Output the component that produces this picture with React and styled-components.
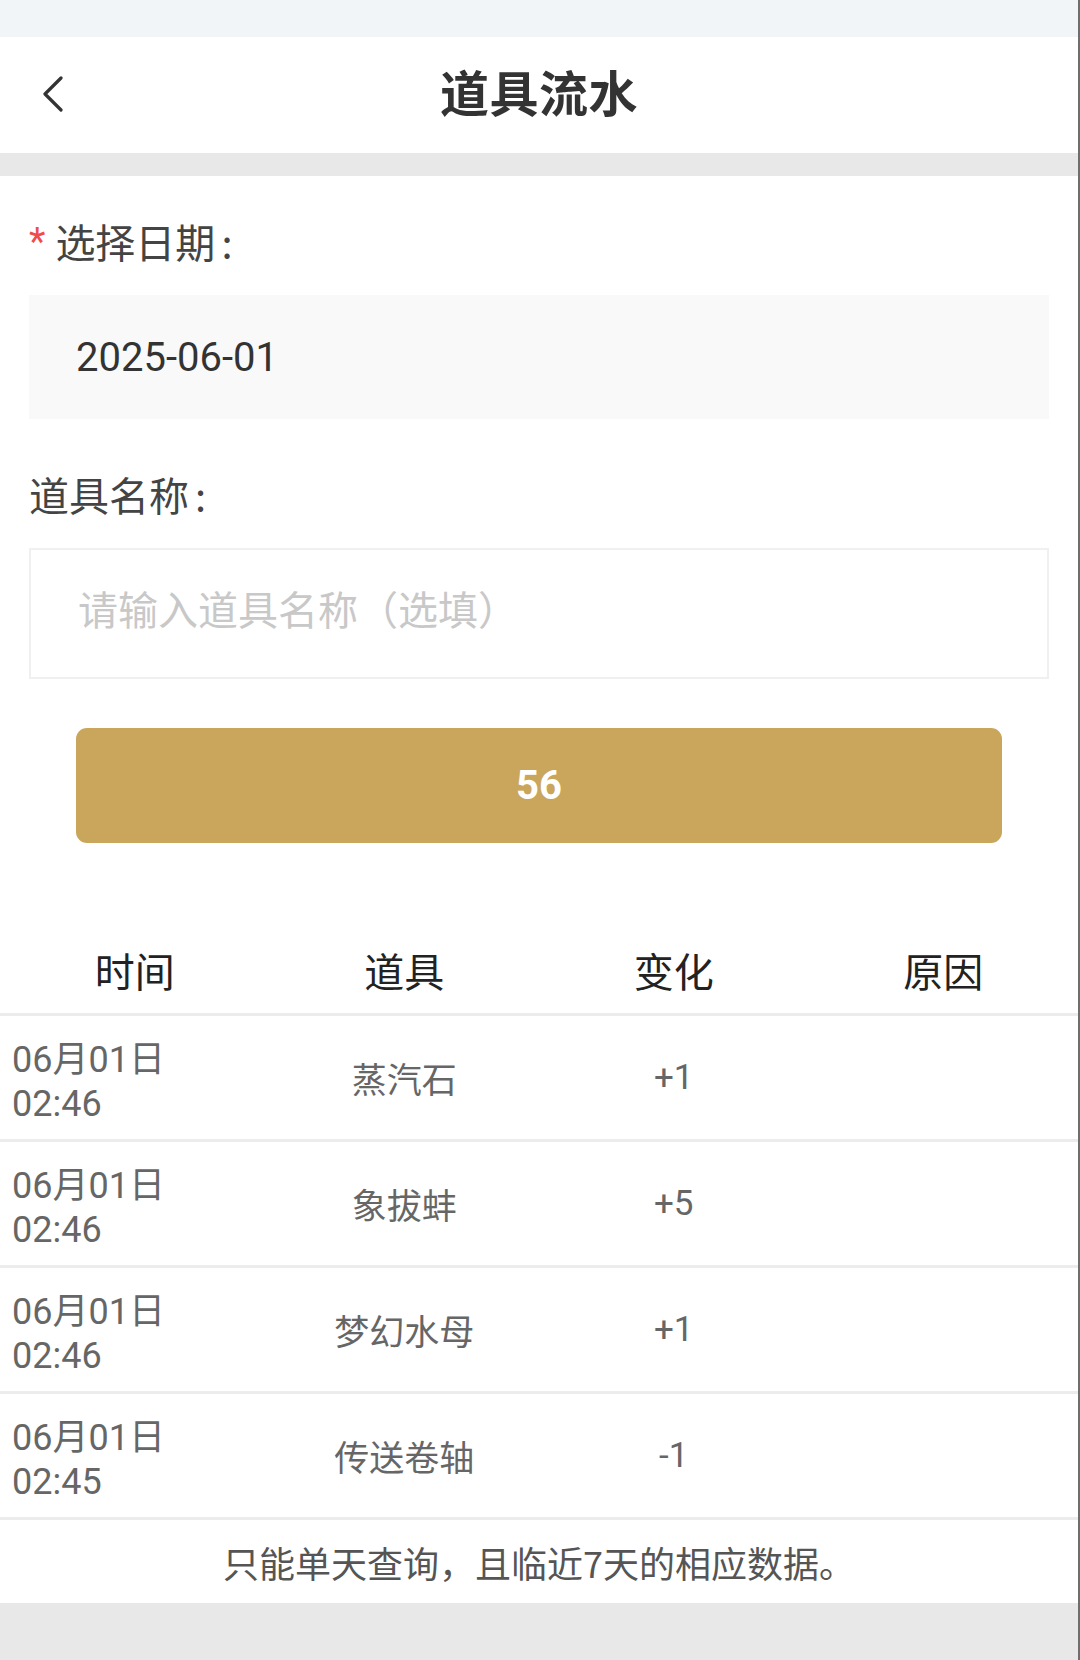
import React from "react";
import styled, { createGlobalStyle } from "styled-components";

const RECORDS = [
  { date: "06月01日", time: "02:46", item: "蒸汽石", change: "+1", reason: "" },
  { date: "06月01日", time: "02:46", item: "象拔蚌", change: "+5", reason: "" },
  { date: "06月01日", time: "02:46", item: "梦幻水母", change: "+1", reason: "" },
  { date: "06月01日", time: "02:45", item: "传送卷轴", change: "-1", reason: "" },
];

const COLUMNS = ["时间", "道具", "变化", "原因"];

const GlobalStyle = createGlobalStyle`
  html, body {
    margin: 0;
    padding: 0;
    background: #e8e8e8;
  }
  body {
    font-family: Roboto, "Noto Sans CJK SC", sans-serif;
  }
  * {
    box-sizing: border-box;
  }
`;

export default function App() {
  return (
    <>
      <GlobalStyle />
      <Page>
        <StatusBar />
        <Header>
          <BackButton aria-label="back">
            <svg width="22" height="36" viewBox="0 0 22 36" fill="none">
              <path
                d="M19 2 L3 18 L19 34"
                stroke="#333"
                strokeWidth="3.2"
                strokeLinecap="round"
                strokeLinejoin="round"
              />
            </svg>
          </BackButton>
          <Title>道具流水</Title>
          <span />
        </Header>
        <Spacer />
        <Form>
          <Label>
            <Required>*</Required>选择日期<Colon>:</Colon>
          </Label>
          <DateBox>2025-06-01</DateBox>
          <Label $gapTop={47}>
            道具名称<Colon>:</Colon>
          </Label>
          <NameInput placeholder="请输入道具名称（选填）" />
          <QueryButton>56</QueryButton>
        </Form>
        <Table>
          <HeadRow>
            {COLUMNS.map((c) => (
              <HeadCell key={c}>{c}</HeadCell>
            ))}
          </HeadRow>
          {RECORDS.map((r, i) => (
            <Row key={i}>
              <TimeCell>
                {r.date}
                <br />
                {r.time}
              </TimeCell>
              <Cell>{r.item}</Cell>
              <Cell>{r.change}</Cell>
              <Cell>{r.reason}</Cell>
            </Row>
          ))}
        </Table>
        <Note>只能单天查询，且临近7天的相应数据。</Note>
      </Page>
    </>
  );
}

const Page = styled.div`
  width: 1080px;
  min-height: 1660px;
  background: #e8e8e8;
  border-right: 2px solid #6e6e6e;
  display: flex;
  flex-direction: column;
`;

const StatusBar = styled.div`
  height: 37px;
  background: #f1f5f8;
`;

const Header = styled.header`
  height: 116px;
  background: #fff;
  display: grid;
  grid-template-columns: 1fr auto 1fr;
  align-items: center;
  padding: 0 42px;
`;

const BackButton = styled.button`
  justify-self: start;
  border: 0;
  padding: 0;
  background: none;
  display: flex;
  margin-top: -2px;
`;

const Title = styled.h1`
  margin: 0 0 10px;
  font-size: 49px;
  font-weight: 700;
  color: #333;
  letter-spacing: 0.5px;
  font-family: "Noto Sans CJK SC", sans-serif;
`;

const Spacer = styled.div`
  height: 23px;
  background: #e8e8e8;
`;

const Form = styled.section`
  background: #fff;
  padding: 37px 29px 0;
  display: flex;
  flex-direction: column;
`;

const Label = styled.div`
  height: 56px;
  line-height: 56px;
  font-size: 40px;
  color: #444;
  margin-top: ${(p) => p.$gapTop || 0}px;
  margin-bottom: 26px;
  font-family: "Noto Sans CJK SC", sans-serif;
`;

const Colon = styled.span`
  margin-left: 6px;
`;

const Required = styled.span`
  color: #f04c4c;
  font-size: 38px;
  margin-right: 10px;
  font-family: Roboto, sans-serif;
  position: relative;
  top: -3px;
`;

const DateBox = styled.div`
  height: 124px;
  background: #f9f9f9;
  display: flex;
  align-items: center;
  padding-left: 47px;
  font-size: 40px;
  color: #333;
`;

const NameInput = styled.input`
  height: 131px;
  border: 2px solid #f0f0f0;
  background: #fff;
  padding: 0 0 4px 47px;
  font-size: 40px;
  color: #333;
  font-family: Roboto, "Noto Sans CJK SC", sans-serif;
  outline: none;
  &::placeholder {
    color: #c8c8c8;
  }
`;

const QueryButton = styled.button`
  margin: 49px 47px 0;
  height: 115px;
  border: 0;
  border-radius: 11px;
  background: #c9a65c;
  color: #fff;
  font-size: 40px;
  font-weight: 700;
  font-family: Roboto, sans-serif;
`;

const Table = styled.section`
  background: #fff;
  padding-top: 87px;
`;

const Grid = styled.div`
  display: grid;
  grid-template-columns: repeat(4, 1fr);
  align-items: center;
`;

const HeadRow = styled(Grid)`
  height: 86px;
  border-bottom: 3px solid #ececec;
  align-content: start;
`;

const HeadCell = styled.div`
  text-align: center;
  font-size: 40px;
  color: #222;
  line-height: 84px;
  margin-top: -2px;
  font-family: "Noto Sans CJK SC", sans-serif;
`;

const Row = styled(Grid)`
  height: 126px;
  border-bottom: 3px solid #ececec;
`;

const Cell = styled.div`
  text-align: center;
  font-size: 35px;
  color: #666;
  font-family: Roboto, "Noto Sans CJK SC", sans-serif;
`;

const TimeCell = styled(Cell)`
  text-align: left;
  padding: 8px 0 0 12px;
  font-size: 36px;
  line-height: 44px;
`;

const Note = styled.p`
  margin: 0;
  background: #fff;
  height: 83px;
  display: flex;
  align-items: center;
  justify-content: center;
  font-size: 36px;
  color: #555;
  font-family: "Noto Sans CJK SC", sans-serif;
`;
